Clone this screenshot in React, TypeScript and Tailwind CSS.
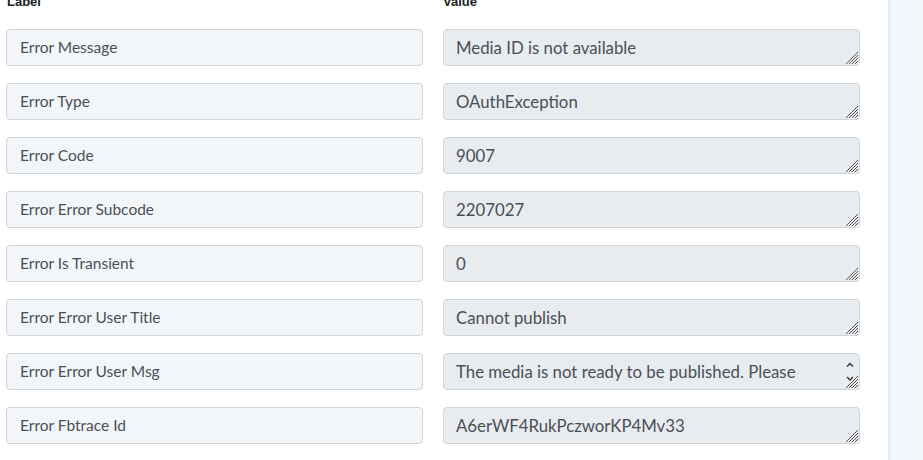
import { useState } from "react";

interface ErrorField {
  label: string;
  value: string;
}

const fields: ErrorField[] = [
  { label: "Error Message", value: "Media ID is not available" },
  { label: "Error Type", value: "OAuthException" },
  { label: "Error Code", value: "9007" },
  { label: "Error Error Subcode", value: "2207027" },
  { label: "Error Is Transient", value: "0" },
  { label: "Error Error User Title", value: "Cannot publish" },
  {
    label: "Error Error User Msg",
    value: "The media is not ready to be published. Please wait a moment.",
  },
  { label: "Error Fbtrace Id", value: "A6erWF4RukPczworKP4Mv33" },
];

// hatched corner grip of a resizable field
function ResizeGrip() {
  return (
    <svg
      className="pointer-events-none absolute bottom-[2px] right-[2px]"
      width="13"
      height="13"
      viewBox="0 0 13 13"
      stroke="#555"
      strokeWidth="1"
    >
      <path d="M13 1 L1 13" />
      <path d="M13 4 L4 13" />
      <path d="M13 7 L7 13" />
      <path d="M13 10 L10 13" />
    </svg>
  );
}

// long values get a scrollbar; draw its arrows over the field
function ScrollArrows() {
  return (
    <svg
      className="pointer-events-none absolute right-[5px] top-[6px]"
      width="10"
      height="26"
      viewBox="0 0 10 26"
      fill="none"
      stroke="#333"
      strokeWidth="1.4"
    >
      <path d="M2 7.5 L5 4.5 L8 7.5" />
      <path d="M2 18 L5 21 L8 18" />
    </svg>
  );
}

export default function App() {
  const [rows] = useState(fields);

  return (
    <div className="flex h-[460px] w-[923px] overflow-hidden bg-white font-['Lato','Liberation_Sans',sans-serif]">
      <div className="w-[888px] pl-[6px] pr-[28px]">
        <div className="-mt-[8px] grid grid-cols-2 gap-x-[20px] font-['Liberation_Sans',Arial,sans-serif] text-[13px] font-bold text-[#222]">
          <div className="pl-[1px]">Label</div>
          <div>Value</div>
        </div>
        <div className="mt-[17px] flex flex-col gap-[17px]">
          {rows.map((row) => {
            const long = row.value.length > 45;
            return (
              <div key={row.label} className="grid grid-cols-2 gap-x-[20px]">
                <input
                  readOnly
                  value={row.label}
                  className="h-[37px] w-full rounded-[4px] border border-[#cfd4da] bg-[#f3f6f9] px-[13px] text-[15.5px] text-[#4a4f57] outline-none"
                />
                <div className="relative">
                  <textarea
                    readOnly
                    rows={1}
                    value={row.value}
                    className="block h-[37px] w-full resize-none overflow-hidden rounded-[4px] border border-[#cfd4da] bg-[#e9ecef] pl-[12px] pr-[32px] pt-[6px] pb-0 text-[16.8px] leading-[24px] text-[#4a4f57] outline-none"
                  />
                  <ResizeGrip />
                  {long && <ScrollArrows />}
                </div>
              </div>
            );
          })}
        </div>
      </div>
      <div className="flex-1 border-l-[3px] border-[#e6ecf6] bg-[#f3f6fa]" />
    </div>
  );
}
